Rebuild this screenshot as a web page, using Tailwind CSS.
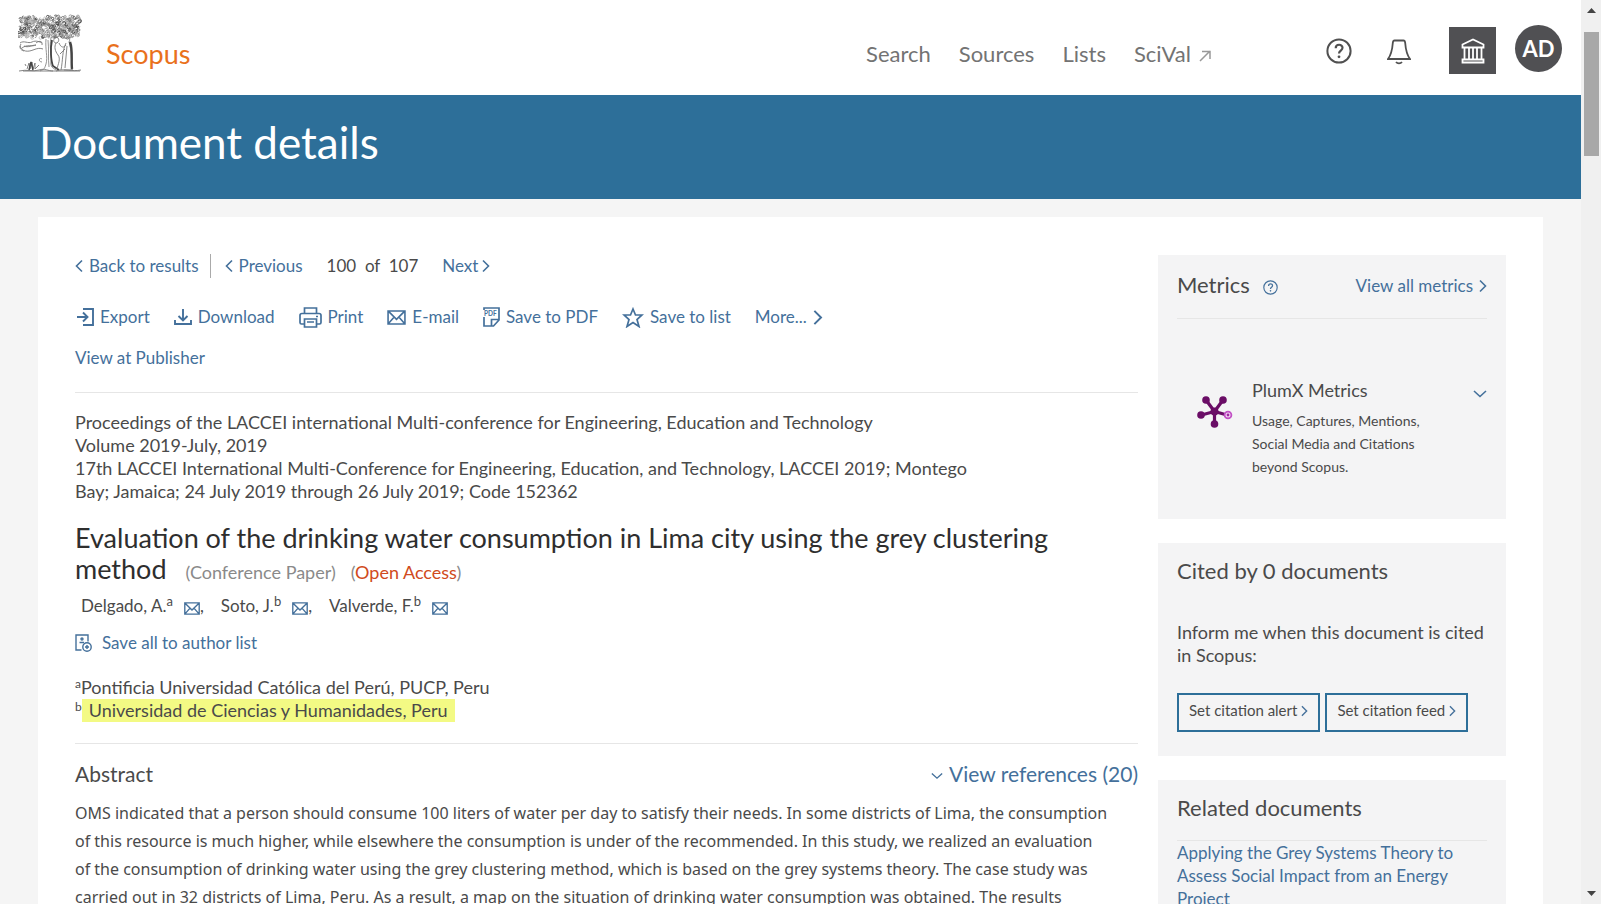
<!DOCTYPE html>
<html lang="en">
<head>
    <meta charset="UTF-8">
    <meta name="viewport" content="width=device-width, initial-scale=1.0">
    <title>Scopus - Document details</title>
    <script src="https://cdn.jsdelivr.net/npm/@tailwindcss/browser@4"></script>
</head>
<body class="h-screen overflow-hidden flex bg-[#f5f5f5] font-[Lato,sans-serif] text-[17px] text-[#4a4a4a]">
    <!-- Icons used more than once -->
    <svg class="hidden">
        <symbol id="right" viewBox="0 0 8 14"><path d="M1 1.500l5.500 5.500L1 12.500" fill="none" stroke="currentColor" stroke-width="1.600"/></symbol>
        <symbol id="left" viewBox="0 0 8 14"><path d="M7 1.500L1.500 7L7 12.500" fill="none" stroke="currentColor" stroke-width="1.600"/></symbol>
        <symbol id="down" viewBox="0 0 14 8"><path d="M1 1l6 5.500L13 1" fill="none" stroke="currentColor" stroke-width="1.600"/></symbol>
        <symbol id="mail" viewBox="0 0 20 16"><path d="M1 1h18v14H1zM1 1l9 9 9-9M1 15l6.500-7.500M19 15l-6.500-7.500" fill="none" stroke="currentColor" stroke-width="1.700"/></symbol>
        <symbol id="help" viewBox="0 0 26 26"><circle cx="13" cy="13" r="11.600" fill="none" stroke="currentColor" stroke-width="2"/><path d="M9.700 10.200c0-4.600 6.800-4.400 6.800-.4 0 2.800-3.500 2.700-3.500 5.700" fill="none" stroke="currentColor" stroke-width="2.200"/><circle cx="13" cy="18.800" r="1.400" fill="currentColor"/></symbol>
    </svg>

    <div class="flex-1 min-w-0 flex flex-col overflow-hidden">
        <header class="h-[95px] shrink-0 bg-white flex items-center pl-[18px] pr-[19px]">
            <a href="#" aria-label="Elsevier" class="shrink-0">
                <svg id="tree" class="w-16 h-16 -mt-1" viewBox="0 0 64 64" fill="none" stroke="#555" stroke-width=".9">
                    <g id="leaves"></g>
                    <path d="M2 29c4-3 8 1 12-1s8 0 10 1M2 32c2 6 8 6 13 4s7-2 10-1M4 34c5-4 10-1 14-3M6 32c4 2 8-1 12-1M24 31c1-5-4-4-6-2M3 30c-2 3-1 6 3 7" stroke="#777"/>
                    <path d="M28 25c-1 10 2 18 0 25s-3 5-6 7M33 24c-2 9 1 17 0 23s2 7 5 9M30 26c1 9 0 19 1 27M24 45c-3-2-4 3 0 3" stroke="#888"/>
                    <path d="M34 26c-2 9-1 21 1 26l6 4" stroke="#444" stroke-width="1.800"/>
                    <path d="M37 24c4-2 5 3 2 5-4 0-4-3-2-5zM38 29c-2 4-1 8 2 12s0 9-1 14M41 29c2 5 5 5 7 2M42 40l5-5" stroke="#777"/>
                    <path d="M48 25c2-3 5 0 3 3M48 29c-4 8-3 17-5 27M51 28c3 8 2 18 3 28M49 32l-2 22M46 56h9" stroke="#777"/>
                    <path d="M52 28c3 8 1 18 2 27" stroke="#444" stroke-width="2.400"/>
                    <path d="M1 57c8-2 14 1 20-1s9 1 14 1M38 57c8-3 16 1 25-1M5 57h57M9 55l2-6 1 6 2-7 1 7 2-6v6l4-4M8 52l-1-2" stroke="#777"/>
                    <path d="M11 56l2-8 2 8" stroke="#444" stroke-width="1.500"/>
                </svg>
            </a>
            <a href="#" class="ml-6 mt-[14px] text-[27px] text-[#e9711c]">Scopus</a>
            <nav class="ml-auto mr-[115px] mt-3 flex items-center gap-7 text-[22px] text-[#737373]">
                <a href="#">Search</a>
                <a href="#">Sources</a>
                <a href="#">Lists</a>
                <a href="#" class="flex items-center gap-2">SciVal
                    <svg class="w-3 h-3 mt-1" viewBox="0 0 12 12" fill="none" stroke="#999" stroke-width="1.500"><path d="M1 11L11 1M3 1.500h8V9"/></svg>
                </a>
            </nav>
            <button type="button" aria-label="Help" class="mt-[6px] text-[#505050]"><svg class="w-[26px] h-[26px]"><use href="#help"/></svg></button>
            <button type="button" aria-label="Alerts" class="ml-[35px] mt-2 text-[#505050]">
                <svg class="w-6 h-[26px]" viewBox="0 0 24 26" fill="none" stroke="currentColor" stroke-width="1.800"><path d="M7.500 1.500h9c1.500 0 1.500 1 1.700 2.500.5 6.500 1 11 4.800 16H1c3.800-5 4.300-9.500 4.800-16 .2-1.500.2-2.500 1.700-2.500zM9 23c1.500 1.800 4.500 1.800 6 0"/></svg>
            </button>
            <button type="button" aria-label="Institution" class="ml-[38px] mt-[6px] w-[47px] h-[47px] bg-[#505053] flex items-center justify-center">
                <svg class="w-6 h-[26px]" viewBox="0 0 24 26" fill="none" stroke="#fff" stroke-width="1.800"><path d="M1.500 6.500L12 1.500 22.500 6.500v3h-21zM1.500 21.500h21v3h-21zM3.500 9.500v12M20.500 9.500v12M8 10v11M12 10v11M16 10v11"/></svg>
            </button>
            <button type="button" class="ml-[19px] mt-0.5 w-[47px] h-[47px] rounded-full bg-[#505053] text-white text-[22px] font-bold">AD</button>
        </header>

        <div class="h-[104px] shrink-0 bg-[#2d6f99] pl-[39px] pt-[19px]">
            <h1 class="text-[44px] leading-[56px] text-white">Document details</h1>
        </div>

        <main class="ml-[38px] mr-[38px] mt-[18px] flex-1 min-h-0 bg-white px-[37px] pt-[37px] flex gap-5">
            <article class="flex-1 min-w-0">
                <!-- Result navigation -->
                <nav class="h-6 flex items-center text-[#44709b]">
                    <a href="#" class="flex items-center gap-[6px]"><svg class="w-2 h-[14px]"><use href="#left"/></svg>Back to results</a>
                    <span class="ml-[11px] mr-[10px] pr-1 h-6 border-l border-[#aaa]"></span>
                    <a href="#" class="flex items-center gap-[6px]"><svg class="w-2 h-[14px]"><use href="#left"/></svg>Previous</a>
                    <span class="mx-6 text-[#4a4a4a] whitespace-pre">100  of  107</span>
                    <a href="#" class="flex items-center gap-1">Next<svg class="w-2 h-[14px]"><use href="#right"/></svg></a>
                </nav>

                <!-- Actions -->
                <div class="mt-[27px] h-6 flex items-center gap-6 text-[#44709b]">
                    <button type="button" class="flex items-center gap-[6px] pl-0.5">
                        <svg class="w-[17px] h-[18px]" viewBox="0 0 17 18" fill="none" stroke="currentColor" stroke-width="1.900"><path d="M6 1h10v16H6M0 9h10M6 4.500L10.500 9 6 13.500"/></svg>Export</button>
                    <button type="button" class="flex items-center gap-[6px]">
                        <svg class="w-[18px] h-[16px]" viewBox="0 0 18 16" fill="none" stroke="currentColor" stroke-width="1.900"><path d="M9 0v11M4.500 7L9 11.500 13.500 7M1 11v4h16v-4"/></svg>Download</button>
                    <button type="button" class="flex items-center gap-[6px]">
                        <svg class="w-[23px] h-[21px]" viewBox="0 0 23 21" fill="none" stroke="currentColor" stroke-width="1.700"><path d="M5.500 6V1h12v5M5 17H2.500Q1 17 1 15.500v-7Q1 6.500 3 6.500h17q2 0 2 2v7q0 1.500-1.500 1.500H18M5.500 12h12v8h-12zM8 15h7M17 9.500h2"/></svg>Print</button>
                    <button type="button" class="flex items-center gap-[6px]"><svg class="w-[19px] h-[15px]"><use href="#mail"/></svg>E-mail</button>
                    <button type="button" class="flex items-center gap-[6px]">
                        <svg class="w-[17px] h-5" viewBox="0 0 17 20" fill="none" stroke="currentColor" stroke-width="1.700"><path d="M1 3V1h15v12l-5.500 6H1V10M8.500 19v-6.500H16"/><text x="1" y="8.500" font-size="6.500" font-weight="bold" fill="currentColor" stroke="none">PDF</text></svg>Save to PDF</button>
                    <button type="button" class="flex items-center gap-[6px]">
                        <svg class="w-[22px] h-[21px]" viewBox="0 0 22 21" fill="none" stroke="currentColor" stroke-width="1.700"><path d="M11 2l2.500 6H20l-5 4.500 2 7-6-4-6 4 2-7L2 8h6.500z"/></svg>Save to list</button>
                    <button type="button" class="flex items-center gap-[6px]">More...<svg class="w-[10px] h-[17px]"><use href="#right"/></svg></button>
                </div>
                <div class="mt-4 h-6"><a href="#" class="text-[#44709b]">View at Publisher</a></div>

                <!-- Source -->
                <p class="mt-[23px] pt-[18px] border-t border-[#e6e6e6] text-[18px] leading-[23px] whitespace-nowrap">
                    Proceedings of the LACCEI international Multi-conference for Engineering, Education and Technology<br>
                    Volume 2019-July, 2019<br>
                    17th LACCEI International Multi-Conference for Engineering, Education, and Technology, LACCEI 2019; Montego<br>
                    Bay; Jamaica; 24 July 2019 through 26 July 2019; Code 152362
                </p>

                <h2 class="mt-[19px] text-[27px] leading-[31px] text-[#2e2e2e]">
                    Evaluation of the drinking water consumption in Lima city using the grey clustering<br>
                    method
                    <span class="ml-3 text-[18px] leading-none text-[#8a8a8a]">(Conference Paper)</span>
                    <span class="ml-2 text-[18px] leading-none text-[#8a8a8a]">(<span class="text-[#d04a20]">Open Access</span>)</span>
                </h2>

                <!-- Authors -->
                <ul class="mt-[10px] ml-[6px] h-6 flex items-center gap-[17px]">
                    <li class="flex items-center"><span>Delgado, A.<sup class="text-[13px]">a</sup></span><a href="#" aria-label="Mail Delgado" class="ml-[11px] mt-1 text-[#44709b]"><svg class="w-4 h-[13px]"><use href="#mail"/></svg></a>,</li>
                    <li class="flex items-center"><span>Soto, J.<sup class="text-[13px]">b</sup></span><a href="#" aria-label="Mail Soto" class="ml-[11px] mt-1 text-[#44709b]"><svg class="w-4 h-[13px]"><use href="#mail"/></svg></a>,</li>
                    <li class="flex items-center"><span>Valverde, F.<sup class="text-[13px]">b</sup></span><a href="#" aria-label="Mail Valverde" class="ml-[11px] mt-1 text-[#44709b]"><svg class="w-4 h-[13px]"><use href="#mail"/></svg></a></li>
                </ul>
                <button type="button" class="mt-[13px] h-6 flex items-center gap-[10px] text-[#44709b]">
                    <svg class="w-[17px] h-[18px]" viewBox="0 0 17 18" fill="none" stroke="currentColor" stroke-width="1.400"><path d="M6.500 16H1V1h12v6.500M4.500 8.500h4.500"/><circle cx="7" cy="5" r="1"/><circle cx="12" cy="13" r="4.200"/><path d="M12 11v4M10 13h4"/></svg>Save all to author list
                </button>
                <div class="mt-[21px] text-[18px] leading-[23px]">
                    <p><sup class="text-[12px]">a</sup>Pontificia Universidad Católica del Perú, PUCP, Peru</p>
                    <p><sup class="text-[12px]">b</sup><mark class="inline-block bg-[#f3fa84] text-inherit px-[7px]">Universidad de Ciencias y Humanidades, Peru</mark></p>
                </div>

                <!-- Abstract -->
                <section class="mt-[21px] pt-4 border-t border-[#e6e6e6]">
                    <div class="flex justify-between text-[21px] leading-7">
                        <h3>Abstract</h3>
                        <a href="#" class="flex items-center gap-[6px] text-[#44709b]"><svg class="w-3 h-2 mt-1"><use href="#down"/></svg>View references (20)</a>
                    </div>
                    <p class="mt-[11px] font-['Noto_Sans',sans-serif] text-[16px] leading-7 whitespace-nowrap">
                        OMS indicated that a person should consume 100 liters of water per day to satisfy their needs. In some districts of Lima, the consumption<br>
                        of this resource is much higher, while elsewhere the consumption is under of the recommended. In this study, we realized an evaluation<br>
                        of the consumption of drinking water using the grey clustering method, which is based on the grey systems theory. The case study was<br>
                        carried out in 32 districts of Lima, Peru. As a result, a map on the situation of drinking water consumption was obtained. The results
                    </p>
                </section>
            </article>

            <aside class="w-[348px] shrink-0 mt-px flex flex-col gap-6">
                <section class="h-[264px] shrink-0 bg-[#f4f4f5] px-[19px] pt-4">
                    <div class="flex items-center pb-[19px] border-b border-[#e6e6e6]">
                        <h3 class="text-[22px] leading-7">Metrics</h3>
                        <button type="button" aria-label="About metrics" class="ml-[13px] mt-1 text-[#44709b]"><svg class="w-[15px] h-[15px]"><use href="#help"/></svg></button>
                        <a href="#" class="ml-auto mt-0.5 flex items-center gap-[6px] text-[#44709b]">View all metrics<svg class="w-2 h-[14px]"><use href="#right"/></svg></a>
                    </div>
                    <div class="mt-[59px] flex">
                        <svg class="ml-5 mt-[18px] w-9 h-8" viewBox="0 0 36 32" fill="#6a0d66" stroke="#6a0d66" stroke-width="3.200"><path d="M17.500 15.500L9 4M17.500 15.500L26 4M17.500 15.500L4.500 19M17.500 15.500V28M17.500 15.500L30 19"/><g stroke="none"><circle cx="9" cy="4" r="3.800"/><circle cx="26" cy="4" r="3.800"/><circle cx="4" cy="19" r="3.800"/><circle cx="17.500" cy="28" r="3.800"/><circle cx="17.500" cy="15.500" r="4"/></g><circle cx="31" cy="19" r="3.400" fill="#f4d8f4" stroke="#c14fc4" stroke-width="1.800"/><circle cx="31" cy="19" r="1.400" fill="#a02ba3" stroke="none"/></svg>
                        <div class="ml-[19px]">
                            <h4 class="text-[18px] leading-6">PlumX Metrics</h4>
                            <p class="mt-[7px] text-[14px] leading-[23px]">Usage, Captures, Mentions,<br>Social Media and Citations<br>beyond Scopus.</p>
                        </div>
                        <button type="button" aria-label="Expand" class="ml-auto mt-3 self-start text-[#44709b]"><svg class="w-[14px] h-2"><use href="#down"/></svg></button>
                    </div>
                </section>

                <section class="h-[213px] shrink-0 bg-[#f4f4f5] px-[19px] pt-[14px]">
                    <h3 class="text-[22px] leading-7">Cited by 0 documents</h3>
                    <p class="mt-9 text-[18px] leading-[23px] whitespace-nowrap">Inform me when this document is cited<br>in Scopus:</p>
                    <div class="mt-[26px] flex gap-[5px] text-[15px]">
                        <button type="button" class="h-[39px] px-[10px] pb-1 border-2 border-[#2d6f99] flex items-center gap-1">Set citation alert<svg class="w-[7px] h-3 text-[#44709b]"><use href="#right"/></svg></button>
                        <button type="button" class="h-[39px] px-[10px] pb-1 border-2 border-[#2d6f99] flex items-center gap-1">Set citation feed<svg class="w-[7px] h-3 text-[#44709b]"><use href="#right"/></svg></button>
                    </div>
                </section>

                <section class="shrink-0 bg-[#f4f4f5] px-[19px] pt-[14px]">
                    <h3 class="text-[22px] leading-7 pb-[18px] border-b border-[#e6e6e6]">Related documents</h3>
                    <a href="#" class="block leading-[23px] text-[#44709b]">Applying the Grey Systems Theory to<br>Assess Social Impact from an Energy<br>Project</a>
                </section>
            </aside>
        </main>
    </div>

    <!-- Scrollbar -->
    <div class="w-5 shrink-0 bg-[#f0f0f0] flex flex-col items-center">
        <svg class="mt-2 w-[9px] h-[5px]" viewBox="0 0 9 5"><path d="M0 5l4.500-5L9 5z" fill="#444"/></svg>
        <div class="mt-[19px] w-[15px] h-[124px] bg-[#a8a8a8]"></div>
        <svg class="mt-auto mb-2 w-[9px] h-[5px]" viewBox="0 0 9 5"><path d="M0 0l4.500 5L9 0z" fill="#444"/></svg>
    </div>

    <script>
        // Foliage of the tree logo: small curls scattered over the crown
        let seed = 7;
        function rand() {
            seed = (seed * 16807) % 2147483647;
            return seed / 2147483647;
        }
        const greys = ['#444', '#777', '#999', '#bbb'];
        let leaves = '';
        for (let i = 0; i < 420; i++) {
            const x = 1 + rand() * 60;
            const y = 2 + rand() * 21;
            const r = 0.8 + rand() * 0.8;
            const c = greys[Math.floor(rand() * 4)];
            leaves += `<path d="M${x} ${y}a${r} ${r} 0 1 ${i % 2} ${r} ${r}" stroke="${c}"/>`;
        }
        document.getElementById('leaves').innerHTML = leaves;
    </script>
</body>
</html>
